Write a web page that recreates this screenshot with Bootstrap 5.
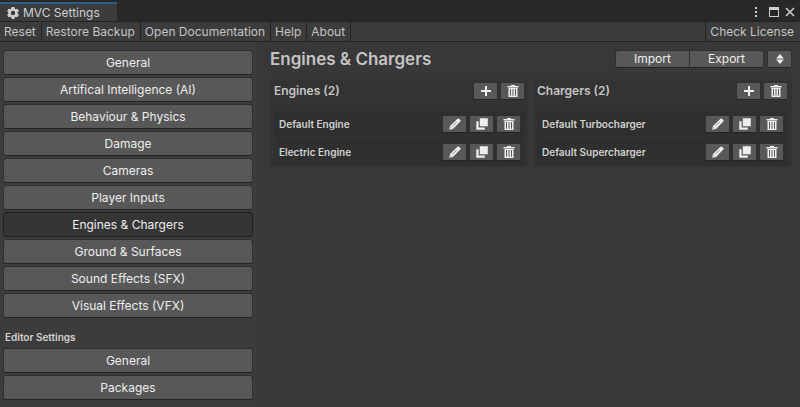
<!DOCTYPE html>
<html lang="en" data-bs-theme="dark">
<head>
<meta charset="utf-8">
<meta name="viewport" content="width=device-width, initial-scale=1">
<title>MVC Settings</title>
<link href="https://cdn.jsdelivr.net/npm/bootstrap@5.3.0/dist/css/bootstrap.min.css" rel="stylesheet">
<style>
body { font-family: Inter, "Liberation Sans", sans-serif; font-size: 12px; line-height: 16px; background: #383838; color: #c4c4c4; }
.titlebar { height: 21px; background: #282828; padding-top: 2px; }
.window-tab { border-top: 2px solid #2c5d87; background: #3c3c3c; width: 117px; padding-left: 7px; gap: 4px; color: #d0d0d0; }
.window-tools { gap: 5px; padding-right: 5px; }
.window-tools button { color: #d0d0d0; }
.toolbar { height: 21px; background: #3c3c3c; border-top: 1px solid #232323; border-bottom: 1px solid #232323; }
.tool-item { color: #c4c4c4; border-right: 1px solid #232323; padding: 0 5px 0 4px; }
.tool-item:first-child { padding-left: 4px; }
.tool-item.end { border-right: 0; border-left: 1px solid #232323; padding: 0 6px 0 4px; }
.workspace { min-height: calc(100vh - 42px); }
.sidebar { width: 256px; background: #3c3c3c; padding: 8px 3px 4px; }
.unity-btn { --bs-btn-padding-x: 0; --bs-btn-padding-y: 0; --bs-btn-font-size: 12px; --bs-btn-line-height: 16px; --bs-btn-border-radius: 3px;
  --bs-btn-bg: #585858; --bs-btn-color: #eeeeee; --bs-btn-border-color: #303030; --bs-btn-hover-bg: #676767; --bs-btn-hover-color: #eeeeee; --bs-btn-hover-border-color: #303030;
  --bs-btn-active-bg: #353535; --bs-btn-active-color: #eeeeee; --bs-btn-active-border-color: #1e1e1e; border-bottom-color: #242424; }
.side-list { gap: 2px; }
.side-list .unity-btn { height: 25px; }
.side-title { font-size: 10px; line-height: 16px; font-weight: 600; margin: 11px 0 3px; padding: 0 2px; color: #d2d2d2; }
.content-area { padding: 8px 8px 8px 14px; }
.page-title { font-size: 17px; line-height: 18px; font-weight: 600; color: #c4c4c4; }
.head-actions { gap: 3px; }
.action { height: 18px; width: 75px; }
.mini { height: 18px; width: 25px; --bs-btn-border-radius: 2px; }
.panels { gap: 4px; margin-top: 11px; }
.panel { background: #333333; padding: 3px 4px 2px; flex: 1 1 0; }
.panel-title { font-size: 12px; line-height: 18px; font-weight: 600; color: #c4c4c4; }
.panel-head { margin-bottom: 11px; }
.btn-row { gap: 2px; }
.entries { gap: 2px; }
.entry { background: #2f2f2f; padding: 4px 4px 4px 5px; font-size: 10px; font-weight: 600; color: #d2d2d2; }
svg { display: block; fill: currentColor; }
</style>
<script src="https://cdn.jsdelivr.net/npm/bootstrap@5.3.0/dist/js/bootstrap.bundle.min.js" defer></script>
</head>
<body>
<svg class="d-none" aria-hidden="true">
  <symbol id="plus" viewBox="0 0 12 12"><path d="M5 1h2v4h4v2H7v4H5V7H1V5h4z"/></symbol>
  <symbol id="trash" viewBox="0 0 12 12"><path fill-rule="evenodd" d="M4 0h4v1h3.500v1.500H.5V1H4zM1.500 3h9v9h-9zM3 4v6.700h1V4zm2.500 0v6.700h1V4zM8 4v6.700h1V4z"/></symbol>
  <symbol id="pencil" viewBox="0 0 12 12"><path fill-rule="evenodd" d="M.2 11.800 1 8 8.200.9Q9.300-.1 10.300.9l.8.8Q12.100 2.700 11.100 3.800L4 11zM1.900 9.200l-.3 1.200 1.200-.3zM3.300 7.900l.4.400 4.200-4.200-.4-.4z"/></symbol>
  <symbol id="copy" viewBox="0 0 12 12"><path d="M3.800.3h8v8h-8zM.3 3.300H2.600v6.200h6.200v2.300H.3z"/></symbol>
  <symbol id="sort" viewBox="0 0 12 12"><path d="M6 1 9.800 5.400H2.200zM2.200 6.600h7.600L6 11z"/></symbol>
</svg>

<header>
  <div class="titlebar d-flex justify-content-between">
    <div class="window-tab d-flex align-items-center">
      <svg width="12" height="12" viewBox="0 0 12 12" aria-hidden="true"><path fill-rule="evenodd" d="M4.600 0h2.800l.4 1.700 1 .6L10.500 1.800l1.400 2.400-1.300 1.200v1.200l1.300 1.200-1.400 2.400-1.700-.5-1 .6L7.400 12H4.600l-.4-1.700-1-.6-1.700.5L.1 7.800l1.300-1.200V5.400L.1 4.200l1.400-2.400 1.700.5 1-.6zM6 3.800a2.200 2.200 0 1 0 0 4.400 2.200 2.200 0 0 0 0-4.400z"/></svg>
      <span>MVC Settings</span>
    </div>
    <div class="window-tools d-flex align-items-center">
      <button class="btn border-0 p-0" type="button" aria-label="Menu"><svg width="12" height="12" viewBox="0 0 12 12"><path d="M4 1h2v2H4zm0 4h2v2H4zm0 4h2v2H4z"/></svg></button>
      <button class="btn border-0 p-0" type="button" aria-label="Maximize"><svg width="12" height="12" viewBox="0 0 12 12"><path fill-rule="evenodd" d="M1 1h10v10H1zM2 4v6h8V4z"/></svg></button>
      <button class="btn border-0 p-0" type="button" aria-label="Close"><svg width="10" height="12" viewBox="0 0 10 12"><path d="m1 2 8 8m0-8-8 8" stroke="currentColor" stroke-width="1.500"/></svg></button>
    </div>
  </div>
  <nav class="toolbar d-flex" aria-label="Toolbar">
    <button class="tool-item bg-transparent border-top-0 border-bottom-0 border-start-0" type="button">Reset</button>
    <button class="tool-item bg-transparent border-top-0 border-bottom-0 border-start-0" type="button">Restore Backup</button>
    <button class="tool-item bg-transparent border-top-0 border-bottom-0 border-start-0" type="button">Open Documentation</button>
    <button class="tool-item bg-transparent border-top-0 border-bottom-0 border-start-0" type="button">Help</button>
    <button class="tool-item bg-transparent border-top-0 border-bottom-0 border-start-0" type="button">About</button>
    <button class="tool-item end bg-transparent border-top-0 border-bottom-0 border-end-0 ms-auto" type="button">Check License</button>
  </nav>
</header>

<div class="workspace d-flex">
  <aside class="sidebar flex-shrink-0">
    <nav class="side-list d-flex flex-column" aria-label="Settings">
      <button class="btn unity-btn" type="button">General</button>
      <button class="btn unity-btn" type="button">Artifical Intelligence (AI)</button>
      <button class="btn unity-btn" type="button">Behaviour &amp; Physics</button>
      <button class="btn unity-btn" type="button">Damage</button>
      <button class="btn unity-btn" type="button">Cameras</button>
      <button class="btn unity-btn" type="button">Player Inputs</button>
      <button class="btn unity-btn active" type="button" aria-current="page">Engines &amp; Chargers</button>
      <button class="btn unity-btn" type="button">Ground &amp; Surfaces</button>
      <button class="btn unity-btn" type="button">Sound Effects (SFX)</button>
      <button class="btn unity-btn" type="button">Visual Effects (VFX)</button>
    </nav>
    <h2 class="side-title">Editor Settings</h2>
    <nav class="side-list d-flex flex-column" aria-label="Editor settings">
      <button class="btn unity-btn" type="button">General</button>
      <button class="btn unity-btn" type="button">Packages</button>
    </nav>
  </aside>

  <main class="content-area flex-grow-1">
    <div class="d-flex justify-content-between align-items-center">
      <h1 class="page-title m-0">Engines &amp; Chargers</h1>
      <div class="head-actions d-flex">
        <div class="btn-group">
          <button class="btn unity-btn action" type="button">Import</button>
          <button class="btn unity-btn action" type="button">Export</button>
        </div>
        <button class="btn unity-btn mini d-flex align-items-center justify-content-center" type="button" aria-label="Sort"><svg width="12" height="12"><use href="#sort"/></svg></button>
      </div>
    </div>
    <div class="panels d-flex">
      <section class="panel">
        <div class="panel-head d-flex justify-content-between">
          <h2 class="panel-title m-0">Engines (2)</h2>
          <div class="btn-row d-flex">
            <button class="btn unity-btn mini d-flex align-items-center justify-content-center" type="button" aria-label="Add engine"><svg width="12" height="12"><use href="#plus"/></svg></button>
            <button class="btn unity-btn mini d-flex align-items-center justify-content-center" type="button" aria-label="Remove all engines"><svg width="12" height="12"><use href="#trash"/></svg></button>
          </div>
        </div>
        <div class="entries d-flex flex-column">
          <div class="entry d-flex justify-content-between align-items-center">
            <span>Default Engine</span>
            <div class="btn-row d-flex">
              <button class="btn unity-btn mini d-flex align-items-center justify-content-center" type="button" aria-label="Edit"><svg width="12" height="12"><use href="#pencil"/></svg></button>
              <button class="btn unity-btn mini d-flex align-items-center justify-content-center" type="button" aria-label="Duplicate"><svg width="12" height="12"><use href="#copy"/></svg></button>
              <button class="btn unity-btn mini d-flex align-items-center justify-content-center" type="button" aria-label="Delete"><svg width="12" height="12"><use href="#trash"/></svg></button>
            </div>
          </div>
          <div class="entry d-flex justify-content-between align-items-center">
            <span>Electric Engine</span>
            <div class="btn-row d-flex">
              <button class="btn unity-btn mini d-flex align-items-center justify-content-center" type="button" aria-label="Edit"><svg width="12" height="12"><use href="#pencil"/></svg></button>
              <button class="btn unity-btn mini d-flex align-items-center justify-content-center" type="button" aria-label="Duplicate"><svg width="12" height="12"><use href="#copy"/></svg></button>
              <button class="btn unity-btn mini d-flex align-items-center justify-content-center" type="button" aria-label="Delete"><svg width="12" height="12"><use href="#trash"/></svg></button>
            </div>
          </div>
        </div>
      </section>
      <section class="panel">
        <div class="panel-head d-flex justify-content-between">
          <h2 class="panel-title m-0">Chargers (2)</h2>
          <div class="btn-row d-flex">
            <button class="btn unity-btn mini d-flex align-items-center justify-content-center" type="button" aria-label="Add charger"><svg width="12" height="12"><use href="#plus"/></svg></button>
            <button class="btn unity-btn mini d-flex align-items-center justify-content-center" type="button" aria-label="Remove all chargers"><svg width="12" height="12"><use href="#trash"/></svg></button>
          </div>
        </div>
        <div class="entries d-flex flex-column">
          <div class="entry d-flex justify-content-between align-items-center">
            <span>Default Turbocharger</span>
            <div class="btn-row d-flex">
              <button class="btn unity-btn mini d-flex align-items-center justify-content-center" type="button" aria-label="Edit"><svg width="12" height="12"><use href="#pencil"/></svg></button>
              <button class="btn unity-btn mini d-flex align-items-center justify-content-center" type="button" aria-label="Duplicate"><svg width="12" height="12"><use href="#copy"/></svg></button>
              <button class="btn unity-btn mini d-flex align-items-center justify-content-center" type="button" aria-label="Delete"><svg width="12" height="12"><use href="#trash"/></svg></button>
            </div>
          </div>
          <div class="entry d-flex justify-content-between align-items-center">
            <span>Default Supercharger</span>
            <div class="btn-row d-flex">
              <button class="btn unity-btn mini d-flex align-items-center justify-content-center" type="button" aria-label="Edit"><svg width="12" height="12"><use href="#pencil"/></svg></button>
              <button class="btn unity-btn mini d-flex align-items-center justify-content-center" type="button" aria-label="Duplicate"><svg width="12" height="12"><use href="#copy"/></svg></button>
              <button class="btn unity-btn mini d-flex align-items-center justify-content-center" type="button" aria-label="Delete"><svg width="12" height="12"><use href="#trash"/></svg></button>
            </div>
          </div>
        </div>
      </section>
    </div>
  </main>
</div>
</body>
</html>
